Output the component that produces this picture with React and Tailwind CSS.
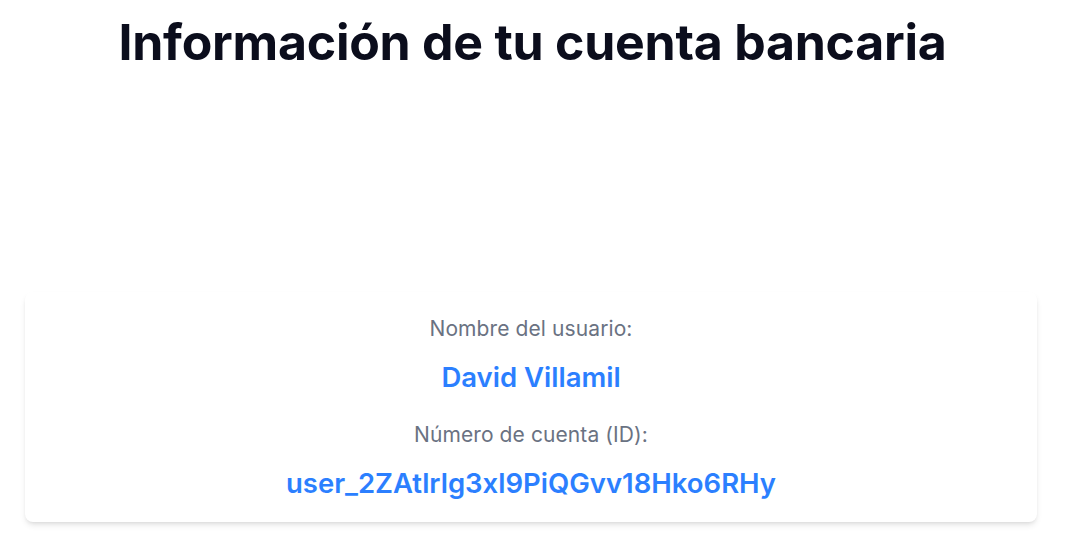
export default function App() {
  return (
    <div className="min-h-[542px] bg-white px-[25px] pt-[10px]" style={{ fontFamily: "Inter, 'Noto Sans', sans-serif" }}>
      <h1 className="text-center text-[50px] font-bold leading-[64px] text-[#0b0d1c] tracking-[-0.25px]">
        Información de tu cuenta bancaria
      </h1>
      <div className="mt-[218px] w-[1012px] rounded-lg bg-white shadow-md px-6 pt-[23px] pb-[21px] flex flex-col items-center text-center">
        <p className="text-[21px] text-gray-500 leading-7 tracking-[0.1px]">Nombre del usuario:</p>
        <p className="mt-[16px] text-[27.5px] font-semibold text-blue-500 leading-9">David Villamil</p>
        <p className="mt-[26px] text-[21px] text-gray-500 leading-7 tracking-[0.1px]">Número de cuenta (ID):</p>
        <p className="mt-[16px] text-[27.5px] font-semibold text-blue-500 leading-9">user_2ZAtlrlg3xl9PiQGvv18Hko6RHy</p>
      </div>
    </div>
  );
}
